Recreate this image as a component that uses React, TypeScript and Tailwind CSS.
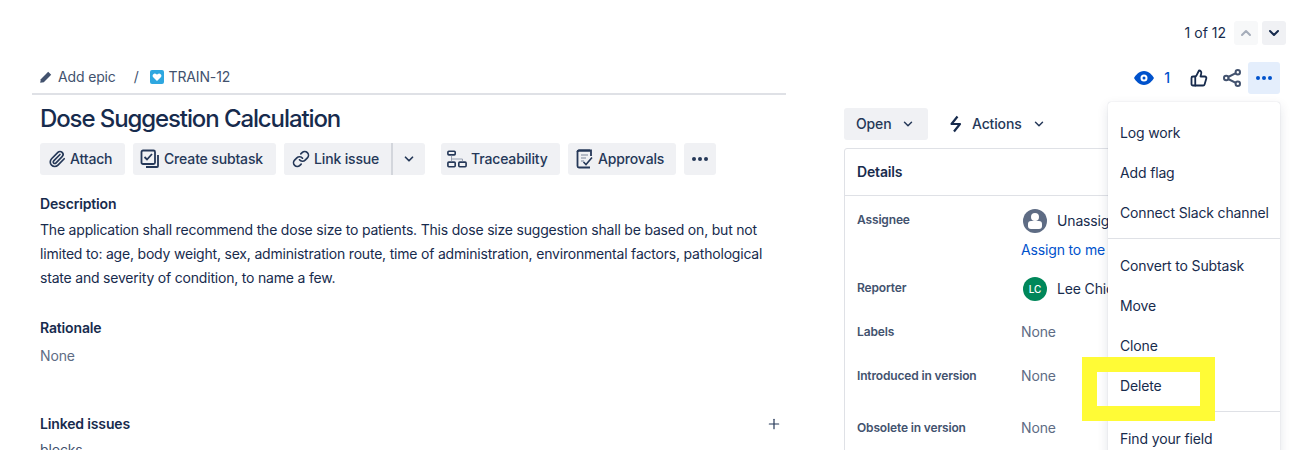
import { ChevronDown, ChevronUp, Plus, ThumbsUp, Paperclip, Link } from 'lucide-react';
import type { ReactNode } from 'react';

function Dots({ className }: { className: string }) {
  return (
    <svg width="18" height="6" viewBox="0 0 18 6" className={className} fill="currentColor">
      <circle cx="3" cy="3" r="2" />
      <circle cx="9" cy="3" r="2" />
      <circle cx="15" cy="3" r="2" />
    </svg>
  );
}

function SubtaskIcon() {
  return (
    <svg width="20" height="20" viewBox="0 0 20 20" fill="none" stroke="#253858" strokeWidth="1.8">
      <rect x="1.5" y="1.5" width="13.5" height="13.5" rx="1.5" />
      <path d="M4.5 8l2.5 2.5 5-5.5" />
      <path d="M18 6v11a1 1 0 0 1-1 1H6" />
    </svg>
  );
}

function TraceIcon() {
  return (
    <svg width="20" height="20" viewBox="0 0 22 20" fill="none" stroke="#253858" strokeWidth="1.8">
      <rect x="1" y="1.5" width="8" height="4" rx="1" />
      <rect x="1" y="13.5" width="8" height="5" rx="1" />
      <rect x="13" y="13.5" width="8" height="5" rx="1" />
      <path d="M5 6v4h12v3M5 10v3" strokeWidth="0.8" stroke="#7a869a" />
    </svg>
  );
}

function ApprovalIcon() {
  return (
    <svg width="18" height="20" viewBox="0 0 18 20" fill="none" stroke="#253858" strokeWidth="1.8">
      <path d="M14 1.5H3a1.5 1.5 0 0 0-1.5 1.5v14A1.5 1.5 0 0 0 3 18.500h11" />
      <path d="M1.500 3a1.500 1.500 0 0 1 1.500-1.500h12V7" />
      <path d="M5 6h7M5 9h5M5 12h3" strokeWidth="1" stroke="#7a869a" />
      <path d="M7.500 13l2.500 2.500 6-7" strokeWidth="1.600" />
    </svg>
  );
}

function ShareIcon() {
  return (
    <svg width="18" height="18" viewBox="0 0 18 18" fill="none" stroke="#42526e" strokeWidth="2">
      <circle cx="14.800" cy="3.200" r="2.200" />
      <circle cx="3.200" cy="9" r="2.200" />
      <circle cx="14.800" cy="14.800" r="2.200" />
      <path d="M5.200 8l7.600-3.800M5.200 10l7.600 3.800" />
    </svg>
  );
}

function ToolButton({ icon, label, className = '' }: { icon?: ReactNode; label?: string; className?: string }) {
  return (
    <div className={`flex h-8 items-center gap-1 rounded-[3px] bg-[#f0f1f4] text-sm font-medium text-[#253858] ${className}`}>
      {icon}
      {label && <span>{label}</span>}
    </div>
  );
}

function MenuItem({ label }: { label: string }) {
  return <div className="flex h-10 items-center whitespace-nowrap px-3 text-sm text-[#172b4d]">{label}</div>;
}

function DetailRow({ label, className, children }: { label: string; className: string; children: ReactNode }) {
  return (
    <div className={`flex pl-3 ${className}`}>
      <div className="w-[164px] shrink-0 text-xs font-semibold leading-4 text-[#42526e]">{label}</div>
      <div>{children}</div>
    </div>
  );
}

function NoneValue() {
  return <div className="text-sm leading-4 text-[#5e6c84]">None</div>;
}

export default function App() {
  return (
    <div className="relative h-[450px] w-[1292px] overflow-hidden bg-white font-['Inter',sans-serif] text-sm tracking-[-0.15px] text-[#172b4d]">
      {/* pager */}
      <div className="flex h-[60px] items-start justify-end gap-1 pr-1.5 pt-[21px]">
        <span className="mr-1 text-sm leading-6 tracking-normal text-[#172b4d]">1 of 12</span>
        <div className="flex size-6 items-center justify-center rounded-[3px] bg-[#f7f8f9] text-[#a5adba]">
          <ChevronUp size={16} strokeWidth={3} />
        </div>
        <div className="flex size-6 items-center justify-center rounded-[3px] bg-[#f0f1f4] text-[#172b4d]">
          <ChevronDown size={16} strokeWidth={3} />
        </div>
      </div>

      <div className="flex pl-8">
        {/* issue body */}
        <div className="w-[754px] shrink-0">
          <div className="flex h-[35px] items-center border-b-2 border-[#dfe1e6] pl-2 pt-[1px] text-[#42526e]">
            <svg width="12" height="12" viewBox="0 0 12 12" fill="#42526e">
              <path d="M8.200.8l3 3-7.400 7.400-3.600.6.600-3.600z" />
            </svg>
            <span className="ml-1.5">Add epic</span>
            <span className="ml-[18px]">/</span>
            <div className="ml-[11px] flex size-[14px] items-center justify-center rounded-[2px] bg-[#2ea7e0]">
              <svg width="10" height="10" viewBox="0 0 10 10" fill="#fff">
                <path d="M5 9L1.200 5.200a2.200 2.200 0 0 1 3.100-3.100L5 2.800l.700-.700a2.200 2.200 0 0 1 3.100 3.100z" />
              </svg>
            </div>
            <span className="ml-[5px]">TRAIN-12</span>
          </div>
          <div className="pl-2">
            <h1 className="mt-2 h-8 text-2xl font-medium leading-8 tracking-[-1.1px] text-[#172b4d]">Dose Suggestion Calculation</h1>
            <div className="mt-2 flex gap-2">
              <ToolButton icon={<Paperclip size={18} strokeWidth={2.2} className="text-[#253858]" />} label="Attach" className="w-[85px] pl-2" />
              <ToolButton icon={<SubtaskIcon />} label="Create subtask" className="w-[143px] pl-[7px]" />
              <div className="flex h-8 rounded-[3px] bg-[#f0f1f4]">
                <ToolButton icon={<Link size={18} strokeWidth={2.2} className="text-[#253858]" />} label="Link issue" className="w-[107px] pl-2" />
                <div className="flex w-[34px] items-center justify-center border-l-2 border-[#d3d6dc] text-[#253858]">
                  <ChevronDown size={14} strokeWidth={3} />
                </div>
              </div>
              <ToolButton icon={<TraceIcon />} label="Traceability" className="ml-2 w-[119px] pl-1.5" />
              <ToolButton icon={<ApprovalIcon />} label="Approvals" className="w-[108px] pl-2" />
              <ToolButton icon={<Dots className="text-[#253858]" />} className="w-8 justify-center" />
            </div>
            <h2 className="mt-5 text-sm font-semibold leading-[18px]">Description</h2>
            <p className="mt-[5px] w-[730px] leading-6 tracking-[-0.2px] text-[#172b4d]">
              The application shall recommend the dose size to patients. This dose size suggestion shall be based on, but not limited to: age, body weight, sex, administration route, time of administration, environmental factors, pathological state and severity of condition, to name a few.
            </p>
            <h2 className="mt-[29px] text-sm font-semibold leading-[18px]">Rationale</h2>
            <p className="mt-[7px] leading-6 text-[#5e6c84]">None</p>
            <div className="mt-[47px] flex items-center justify-between pr-1">
              <h2 className="text-sm font-semibold leading-[18px]">Linked issues</h2>
              <Plus size={16} strokeWidth={1.8} className="text-[#253858]" />
            </div>
            <p className="mt-[5px] leading-6 text-[#42526e]">blocks</p>
          </div>
        </div>

        {/* side column */}
        <div className="ml-[58px] w-[436px] shrink-0">
          <div className="flex h-[35px] items-center">
            <div className="ml-auto flex items-center text-[#0052cc]">
              <svg width="20" height="14" viewBox="0 0 20 14" fill="#0052cc">
                <path fillRule="evenodd" d="M10 0c5 0 8.500 4.500 10 7-1.500 2.500-5 7-10 7S1.500 9.500 0 7c1.500-2.500 5-7 10-7zm0 3.500a3.500 3.500 0 1 0 0 7 3.500 3.500 0 0 0 0-7zm0 2a1.500 1.500 0 1 1 0 3 1.500 1.500 0 0 1 0-3z" />
              </svg>
              <span className="ml-2.5 text-sm font-medium">1</span>
            </div>
            <ThumbsUp size={18} strokeWidth={2.4} className="ml-[20px] text-[#172b4d]" />
            <div className="ml-[15px]">
              <ShareIcon />
            </div>
            <div className="ml-[7px] flex size-8 items-center justify-center rounded-[3px] bg-[#e4eefc]">
              <Dots className="text-[#0052cc]" />
            </div>
          </div>
          <div className="mt-[13px] flex items-center">
            <div className="flex h-8 w-[84px] items-center gap-2.5 rounded-[3px] bg-[#f0f1f4] pl-3 font-medium text-[#253858]">
              Open
              <ChevronDown size={14} strokeWidth={2.500} />
            </div>
            <div className="ml-5 flex items-center font-medium text-[#253858]">
              <svg width="16" height="18" viewBox="0 0 16 18" fill="none" stroke="#172b4d" strokeWidth="2.200" strokeLinejoin="round">
                <path d="M9.500 1.500L3.500 9h8.500L6 16.500" />
              </svg>
              <span className="ml-2">Actions</span>
              <ChevronDown size={14} strokeWidth={2.500} className="ml-2.5" />
            </div>
          </div>
          <div className="mt-2 h-[400px] w-[400px] rounded-t-[3px] border border-[#dfe1e6]">
            <div className="flex h-[47px] items-center border-b border-[#dfe1e6] pl-3 text-sm font-semibold">Details</div>
            <DetailRow label="Assignee" className="pt-4">
              <div className="-mt-[3px] flex h-6 items-center pl-0.5">
                <div className="relative size-6 overflow-hidden rounded-full bg-[#5e6c84]">
                  <div className="absolute left-[8px] top-[4px] size-2 rounded-full bg-white" />
                  <div className="absolute left-[5px] top-[12px] h-[8px] w-[14px] rounded-[3px] bg-white" />
                </div>
                <span className="ml-[10px]">Unassigned</span>
              </div>
              <div className="mt-[7px] leading-5 text-[#0052cc]">Assign to me</div>
            </DetailRow>
            <DetailRow label="Reporter" className="pt-5">
              <div className="-mt-[3px] flex h-6 items-center pl-0.5">
                <div className="flex size-6 items-center justify-center rounded-full bg-[#00875a] text-[10px] font-medium text-white">LC</div>
                <span className="ml-[10px]">Lee Chick</span>
              </div>
            </DetailRow>
            <DetailRow label="Labels" className="pt-[23px]">
              <NoneValue />
            </DetailRow>
            <DetailRow label="Introduced in version" className="pt-7">
              <NoneValue />
            </DetailRow>
            <DetailRow label="Obsolete in version" className="pt-9">
              <NoneValue />
            </DetailRow>
          </div>
        </div>
      </div>

      {/* more actions menu */}
      <div className="absolute left-[1108px] top-[102px] h-[360px] w-[172px] rounded-[3px] bg-white py-[11px] shadow-[0_4px_12px_rgba(9,30,66,0.12),0_0_1px_rgba(9,30,66,0.25)]">
        <MenuItem label="Log work" />
        <MenuItem label="Add flag" />
        <MenuItem label="Connect Slack channel" />
        <div className="mt-[5px] border-t border-[#dfe1e6] pt-[7px]">
          <MenuItem label="Convert to Subtask" />
          <MenuItem label="Move" />
          <MenuItem label="Clone" />
          <MenuItem label="Delete" />
        </div>
        <div className="mt-[5px] border-t border-[#dfe1e6] pt-[7px]">
          <MenuItem label="Find your field" />
        </div>
      </div>

      {/* annotation */}
      <div className="absolute left-[1082px] top-[357px] h-[64px] w-[133px] border-[15px] border-[#fffb36]" />
    </div>
  );
}
